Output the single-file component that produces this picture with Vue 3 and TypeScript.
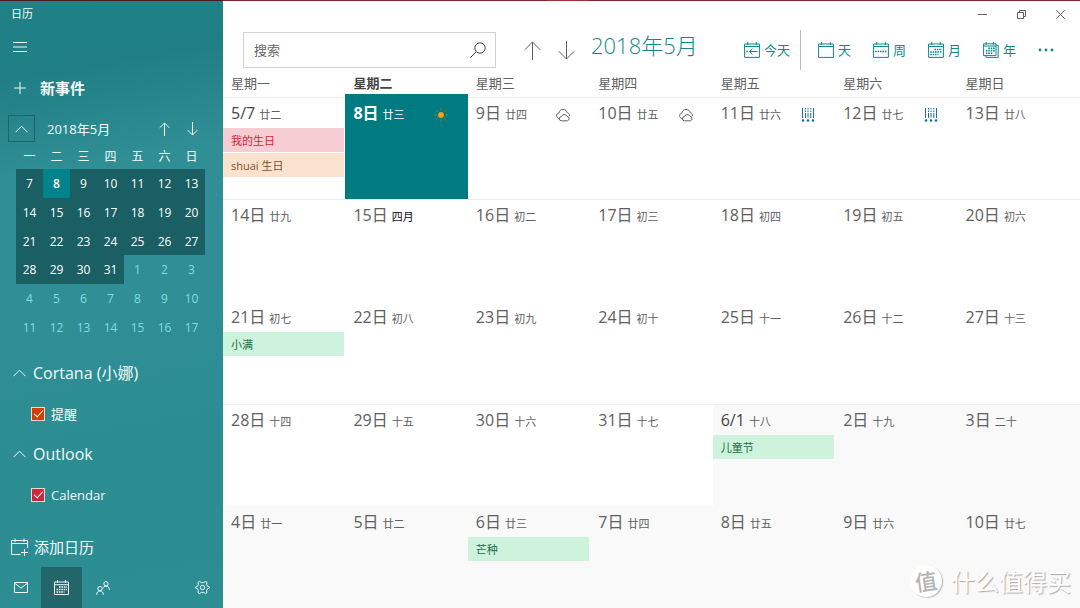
<script setup lang="ts">
import { ref } from 'vue'

interface CalendarEvent {
  title: string
  tone: 'rose' | 'sand' | 'mint'
}

interface Day {
  label: string
  lunar: string
  today?: boolean
  outside?: boolean
  strong?: boolean
  lunarStrong?: boolean
  weather?: 'sun' | 'cloud' | 'rain'
  events?: CalendarEvent[]
}

interface MiniDay {
  n: number
  current: boolean
  today: boolean
}

const weekdays = ['一', '二', '三', '四', '五', '六', '日']

const weeks: Day[][] = [
  [
    {
      label: '5/7',
      lunar: '廿二',
      strong: true,
      events: [
        { title: '我的生日', tone: 'rose' },
        { title: 'shuai 生日', tone: 'sand' },
      ],
    },
    { label: '8日', lunar: '廿三', today: true, weather: 'sun' },
    { label: '9日', lunar: '廿四', weather: 'cloud' },
    { label: '10日', lunar: '廿五', weather: 'cloud' },
    { label: '11日', lunar: '廿六', weather: 'rain' },
    { label: '12日', lunar: '廿七', weather: 'rain' },
    { label: '13日', lunar: '廿八' },
  ],
  [
    { label: '14日', lunar: '廿九' },
    { label: '15日', lunar: '四月', lunarStrong: true },
    { label: '16日', lunar: '初二' },
    { label: '17日', lunar: '初三' },
    { label: '18日', lunar: '初四' },
    { label: '19日', lunar: '初五' },
    { label: '20日', lunar: '初六' },
  ],
  [
    { label: '21日', lunar: '初七', events: [{ title: '小满', tone: 'mint' }] },
    { label: '22日', lunar: '初八' },
    { label: '23日', lunar: '初九' },
    { label: '24日', lunar: '初十' },
    { label: '25日', lunar: '十一' },
    { label: '26日', lunar: '十二' },
    { label: '27日', lunar: '十三' },
  ],
  [
    { label: '28日', lunar: '十四' },
    { label: '29日', lunar: '十五' },
    { label: '30日', lunar: '十六' },
    { label: '31日', lunar: '十七' },
    { label: '6/1', lunar: '十八', strong: true, outside: true, events: [{ title: '儿童节', tone: 'mint' }] },
    { label: '2日', lunar: '十九', outside: true },
    { label: '3日', lunar: '二十', outside: true },
  ],
  [
    { label: '4日', lunar: '廿一', outside: true },
    { label: '5日', lunar: '廿二', outside: true },
    { label: '6日', lunar: '廿三', outside: true, events: [{ title: '芒种', tone: 'mint' }] },
    { label: '7日', lunar: '廿四', outside: true },
    { label: '8日', lunar: '廿五', outside: true },
    { label: '9日', lunar: '廿六', outside: true },
    { label: '10日', lunar: '廿七', outside: true },
  ],
]

const miniWeeks: MiniDay[][] = Array.from({ length: 6 }, (_, w) =>
  Array.from({ length: 7 }, (_, d) => {
    const n = 7 + w * 7 + d
    return { n: n > 31 ? n - 31 : n, current: n <= 31, today: n === 8 }
  }),
)

const query = ref('')
const showReminders = ref(true)
const showCalendar = ref(true)
</script>

<template>
  <div class="window">
    <div class="edge"></div>

    <aside class="sidebar">
      <div class="app-title">日历</div>
      <button class="row menu" aria-label="菜单">
        <svg width="14" height="12" viewBox="0 0 14 12"><path d="M0 1.5H14M0 6H14M0 10.5H14" /></svg>
      </button>
      <button class="row new-event">
        <svg width="12" height="12" viewBox="0 0 12 12"><path d="M6 0V12M0 6H12" /></svg>
        <span>新事件</span>
      </button>

      <div class="mini-head">
        <button class="collapse" aria-label="折叠">
          <svg width="13" height="8" viewBox="0 0 13 8"><path d="M.5 7.2L6.5 1.2L12.5 7.2" /></svg>
        </button>
        <span class="mini-title">2018年5月</span>
        <button class="mini-nav" aria-label="上个月">
          <svg width="11" height="14" viewBox="0 0 11 14"><path d="M5.5 14V1M.7 5.8L5.5 1L10.3 5.8" /></svg>
        </button>
        <button class="mini-nav" aria-label="下个月">
          <svg width="11" height="14" viewBox="0 0 11 14"><path d="M5.5 0V13M.7 8.2L5.5 13L10.3 8.2" /></svg>
        </button>
      </div>

      <table class="mini">
        <thead>
          <tr>
            <th v-for="d in weekdays" :key="d" scope="col">{{ d }}</th>
          </tr>
        </thead>
        <tbody>
          <tr v-for="(week, i) in miniWeeks" :key="i">
            <td v-for="day in week" :key="day.n" :class="{ current: day.current, today: day.today }">{{ day.n }}</td>
          </tr>
        </tbody>
      </table>

      <div class="accounts">
        <button class="row group">
          <svg width="13" height="8" viewBox="0 0 13 8"><path d="M.5 7.2L6.5 1.2L12.5 7.2" /></svg>
          <span>Cortana (小娜)</span>
        </button>
        <label class="row check">
          <input v-model="showReminders" type="checkbox" class="box orange" />
          <span>提醒</span>
        </label>
        <button class="row group">
          <svg width="13" height="8" viewBox="0 0 13 8"><path d="M.5 7.2L6.5 1.2L12.5 7.2" /></svg>
          <span>Outlook</span>
        </button>
        <label class="row check">
          <input v-model="showCalendar" type="checkbox" class="box red" />
          <span>Calendar</span>
        </label>
      </div>

      <button class="row add">
        <svg width="18" height="18" viewBox="0 0 18 18">
          <path d="M9.5 16.5H.6V2.5H16.6V10M.6 5.5H16.6M4 .5V4M13 .5V4M13.5 11V18M10 14.5H17" />
        </svg>
        <span>添加日历</span>
      </button>

      <nav class="tabs">
        <button class="tab" aria-label="邮件">
          <svg width="14" height="11" viewBox="0 0 14 11"><path d="M.5.5H13.5V10.5H.5ZM.5 1L7 6.2L13.5 1" /></svg>
        </button>
        <button class="tab active" aria-label="日历">
          <svg width="15" height="15" viewBox="0 0 15 15">
            <path d="M.5 2H14.5V14.5H.5ZM.5 4.7H14.5M3.5 0V3M11.5 0V3" />
            <path class="dots" d="M5 7H13M2.5 9.5H13M2.5 12H10.5" />
          </svg>
        </button>
        <button class="tab" aria-label="联系人">
          <svg width="14" height="14" viewBox="0 0 14 14">
            <circle cx="4" cy="7.6" r="2.2" />
            <circle cx="10" cy="2.8" r="2.2" />
            <path d="M.7 13.8C.7 11.3 2 9.9 4 9.9S7.3 11.3 7.3 13.8M7.3 7.2C7.7 5.8 8.6 5.1 10 5.1C12 5.1 13.3 6.4 13.3 8.8" />
          </svg>
        </button>
        <button class="tab last" aria-label="设置">
          <svg width="15" height="15" viewBox="0 0 15 15">
            <path d="M4.6 1.4L6.3 2.6H8.7L10.4 1.4L12 2.4L11.6 4.5L12.7 6.4L14.5 7V8L12.7 8.6L11.6 10.5L12 12.6L10.4 13.6L8.7 12.4H6.3L4.6 13.6L3 12.6L3.4 10.5L2.3 8.6L.5 8V7L2.3 6.4L3.4 4.5L3 2.4Z" />
            <circle cx="7.5" cy="7.5" r="2.2" />
          </svg>
        </button>
      </nav>
    </aside>

    <main class="main">
      <div class="controls">
        <button aria-label="最小化"><svg width="9" height="9" viewBox="0 0 9 9"><path d="M0 4.5H9" /></svg></button>
        <button aria-label="还原">
          <svg width="9" height="9" viewBox="0 0 9 9"><path d="M.5 2.5H6.5V8.5H.5ZM2.5 2.5V.5H8.5V6.5H6.5" /></svg>
        </button>
        <button aria-label="关闭"><svg width="9" height="9" viewBox="0 0 9 9"><path d="M.3.3L8.7 8.7M8.7.3L.3 8.7" /></svg></button>
      </div>

      <div class="toolbar">
        <div class="search">
          <input v-model="query" type="text" placeholder="搜索" aria-label="搜索" />
          <button aria-label="开始搜索">
            <svg width="16" height="16" viewBox="0 0 16 16"><circle cx="10" cy="6" r="5.2" /><path d="M6.2 9.8L.5 15.5" /></svg>
          </button>
        </div>
        <button class="step" aria-label="上个月">
          <svg width="17" height="19" viewBox="0 0 17 19"><path d="M8.5 19V1M.7 8.8L8.5 1L16.3 8.8" /></svg>
        </button>
        <button class="step" aria-label="下个月">
          <svg width="17" height="19" viewBox="0 0 17 19"><path d="M8.5 0V18M.7 10.2L8.5 18L16.3 10.2" /></svg>
        </button>
        <h1>2018年5月</h1>

        <div class="views">
          <button class="view">
            <svg width="16" height="16" viewBox="0 0 16 16">
              <path d="M.6 2H15.4V15.4H.6ZM.6 4.5H15.4M3.7 0V3M12.3 0V3M5.5 9.5H13.5M8.5 6.5L5.5 9.5L8.5 12.5" />
              <path class="dots" d="M2.2 9.5H4.5" />
            </svg>
            <span>今天</span>
          </button>
          <span class="divider"></span>
          <button class="view">
            <svg width="16" height="16" viewBox="0 0 16 16"><path d="M.6 2H15.4V15.4H.6ZM.6 4.5H15.4M3.7 0V3M12.3 0V3" /></svg>
            <span>天</span>
          </button>
          <button class="view">
            <svg width="16" height="16" viewBox="0 0 16 16">
              <path d="M.6 2H15.4V15.4H.6ZM.6 4.5H15.4M3.7 0V3M12.3 0V3" />
              <path class="dots" d="M2.2 9.5H14" />
            </svg>
            <span>周</span>
          </button>
          <button class="view">
            <svg width="16" height="16" viewBox="0 0 16 16">
              <path d="M.6 2H15.4V15.4H.6ZM.6 4.5H15.4M3.7 0V3M12.3 0V3" />
              <path class="dots" d="M6.4 7.5H14M2.2 10H14M2.2 12.5H10.5" />
            </svg>
            <span>月</span>
          </button>
          <button class="view">
            <svg width="16" height="16" viewBox="0 0 16 16">
              <path d="M.6 1.8H13V13.6H.6ZM.6 4H13M3.2 0V2.8M10.4 0V2.8M13 3.2H15.2V15.4H3V13.6" />
              <path class="dots" d="M5.3 6.4H12M2.9 8.8H12M2.9 11.2H9.5" />
            </svg>
            <span>年</span>
          </button>
          <button class="view" aria-label="更多">
            <svg width="16" height="4" viewBox="0 0 16 4" class="more">
              <circle cx="2" cy="2" r="1.4" /><circle cx="8" cy="2" r="1.4" /><circle cx="14" cy="2" r="1.4" />
            </svg>
          </button>
        </div>
      </div>

      <table class="month">
        <thead>
          <tr>
            <th v-for="(d, i) in weekdays" :key="d" scope="col" :class="{ today: i === 1 }">星期{{ d }}</th>
          </tr>
        </thead>
        <tbody>
          <tr v-for="(week, w) in weeks" :key="w" :class="{ ruled: w === 0 || w === 1 || w === 3 }">
            <td v-for="day in week" :key="day.label" :class="{ today: day.today, outside: day.outside }">
              <div class="day-head">
                <span class="date" :class="{ strong: day.strong }">{{ day.label }}</span>
                <span class="lunar" :class="{ strong: day.lunarStrong }">{{ day.lunar }}</span>
                <svg v-if="day.weather === 'sun'" class="weather sun" width="14" height="14" viewBox="0 0 14 14">
                  <path d="M7 .3V2.6M7 11.4V13.7M.3 7H2.6M11.4 7H13.7M2.2 2.2L3.8 3.8M10.2 10.2L11.8 11.8M2.2 11.8L3.8 10.2M10.2 3.8L11.8 2.2" />
                  <circle cx="7" cy="7" r="2.9" />
                </svg>
                <svg v-else-if="day.weather === 'cloud'" class="weather cloud" width="14" height="14" viewBox="0 0 14 14">
                  <path d="M5.6 12.8A2.1 2.1 0 0 1 5.4 8.6A3 3 0 0 1 11 8.3A2.3 2.3 0 0 1 11.4 12.8Z" />
                  <path d="M3.2 10.5C1.4 10.3.5 9 .6 7.6C.7 6.2 1.6 5.3 2.9 5.1C3.4 2.8 5 1.4 7 1.4C9.2 1.4 10.8 2.8 11.2 4.7C12.8 5 13.6 6.3 13.5 8" />
                </svg>
                <svg v-else-if="day.weather === 'rain'" class="weather rain" width="14" height="14" viewBox="0 0 14 14">
                  <path d="M1.5 0V10M12.5 0V10M4.5 6V10M7 5V9.5M9.8 6V10" />
                  <path class="dash" d="M4.5 0V6M7 0V5M9.8 0V6" />
                  <circle cx="2" cy="12.5" r="1.3" /><circle cx="7" cy="12.5" r="1.3" /><circle cx="12" cy="12.5" r="1.3" />
                </svg>
              </div>
              <div v-for="ev in day.events" :key="ev.title" class="event" :class="ev.tone">{{ ev.title }}</div>
            </td>
          </tr>
        </tbody>
      </table>
    </main>

    <div class="brand">
      <span class="seal">值</span>
      <span class="brand-name">什么值得买</span>
    </div>
  </div>
</template>

<style>
body {
  margin: 0;
}
</style>

<style scoped>
* {
  box-sizing: border-box;
}

.window {
  position: relative;
  display: grid;
  grid-template-columns: 223px minmax(0, 1fr);
  grid-template-rows: 1px minmax(0, 1fr);
  min-height: 100vh;
  background: #fff;
  color: #606060;
  font-family: 'Open Sans', 'Noto Sans CJK SC', sans-serif;
  font-size: 13px;
  line-height: 16px;
}

button {
  display: flex;
  align-items: center;
  margin: 0;
  padding: 0;
  border: 0;
  background: none;
  color: inherit;
  font: inherit;
  cursor: pointer;
}

svg {
  flex: none;
  fill: none;
  stroke: currentColor;
  stroke-width: 1;
}

.dots {
  stroke-width: 1.6;
  stroke-dasharray: 1.6 0.8;
}

.edge {
  grid-column: 1 / -1;
  background: linear-gradient(90deg, #4c1a1d 0 223px, #7b2b2f 223px 546px, #a82b30 546px 588px, #7b2b2f 588px);
}

/* Sidebar */
.sidebar {
  display: flex;
  flex-direction: column;
  background: linear-gradient(170deg, #1f8286 0%, #1f7f85 12%, #2f8f95 28%, #308f96 50%, #2b8c92 75%, #2c8d93 100%);
  color: #f2fafa;
}

.app-title {
  height: 27px;
  padding-left: 11px;
  font-size: 11px;
  line-height: 26px;
}

.row {
  display: flex;
  align-items: center;
  height: 40px;
}

.menu {
  height: 38px;
  padding-left: 13px;
}

.new-event {
  height: 44px;
  gap: 14px;
  padding-left: 14px;
  font-size: 15px;
  font-weight: 700;
}

.mini-head {
  display: flex;
  align-items: center;
  height: 37px;
  padding: 0 17px 0 8px;
}

.collapse {
  justify-content: center;
  width: 27px;
  height: 27px;
  border: 1px solid #1a6468;
}

.mini-title {
  flex: 1;
  padding-left: 12px;
}

.mini-nav {
  justify-content: center;
  width: 28px;
  height: 28px;
}

.mini {
  display: flex;
  flex-direction: column;
  gap: 4px;
  margin: 0 18px 0 16px;
  font-size: 12px;
}

.mini tr,
.month tr {
  display: grid;
  grid-template-columns: repeat(7, minmax(0, 1fr));
}

.mini th {
  padding: 2px 0 0;
  font-weight: 400;
  text-align: center;
}

.mini tbody {
  display: grid;
  grid-template-rows: repeat(6, 1fr);
  height: 172px;
}

.mini td {
  display: flex;
  align-items: center;
  justify-content: center;
  padding: 2px 0 0;
  color: #7fdde0;
}

.mini td.current {
  background: #195f64;
  color: #fff;
}

.mini td.today {
  background: #00838b;
  font-weight: 600;
}

.accounts {
  flex: 1;
  padding-top: 12px;
}

.group {
  gap: 7px;
  width: 100%;
  padding-left: 13px;
  font-size: 16px;
}

.check {
  gap: 6px;
  height: 41px;
  padding-left: 31px;
}

.box {
  appearance: none;
  display: grid;
  place-items: center;
  width: 14px;
  height: 14px;
  margin: 0;
  border: 1px solid #e9d9d2;
}

.box:checked::before {
  content: '';
  width: 8px;
  height: 4px;
  margin-bottom: 3px;
  border: solid #fff;
  border-width: 0 0 1px 1px;
  transform: rotate(-48deg);
}

.orange {
  background: #da3b01;
}

.red {
  background: #d0263c;
}

.add {
  gap: 5px;
  padding-left: 11px;
  font-size: 15px;
}

.tabs {
  display: flex;
  height: 41px;
}

.tab {
  justify-content: center;
  width: 41px;
}

.tab.active {
  background: #22666b;
}

.tab.last {
  margin-left: auto;
}

/* Main area */
.main {
  display: flex;
  flex-direction: column;
  min-width: 0;
}

.controls {
  display: flex;
  justify-content: flex-end;
  height: 26px;
}

.controls button {
  justify-content: center;
  width: 39px;
}

.toolbar {
  display: flex;
  align-items: center;
  height: 46px;
  padding: 0 26px 0 20px;
}

.search {
  display: flex;
  flex: 0 1 253px;
  height: 36px;
  border: 1px solid #d2d2d2;
}

.search input {
  flex: 1;
  min-width: 0;
  padding: 0 10px;
  border: 0;
  outline: 0;
  background: none;
  color: #444;
  font: inherit;
}

.search input::placeholder {
  color: #666;
  opacity: 1;
}

.search button {
  justify-content: center;
  width: 34px;
  color: #444;
}

.step {
  justify-content: center;
  width: 34px;
  height: 34px;
}

.step:first-of-type {
  margin-left: 19px;
}

h1 {
  margin: 0 0 10px 8px;
  color: #15858a;
  font-size: 22px;
  font-weight: 300;
  line-height: 30px;
  white-space: nowrap;
}

.views {
  display: flex;
  align-items: center;
  gap: 22px;
  margin-left: auto;
  color: #15858a;
}

.view {
  gap: 4px;
  height: 32px;
  white-space: nowrap;
}

.view:first-child {
  margin-right: -12px;
}

.divider {
  width: 1px;
  height: 40px;
  margin-right: -5px;
  background: #bdbdbd;
}

.more {
  fill: currentColor;
  stroke: none;
}

.month {
  display: flex;
  flex: 1;
  flex-direction: column;
}

.month th {
  padding: 0 8px 4px;
  font-weight: 400;
  line-height: 20px;
  text-align: left;
}

.month th.today {
  color: #444;
  font-weight: 700;
}

.month tbody {
  display: grid;
  flex: 1;
  grid-template-rows: repeat(5, minmax(102px, 1fr));
}

.month td {
  min-width: 0;
  padding: 0;
  border-top: 1px solid transparent;
}

.month .ruled td {
  border-top-color: #ececec;
}

.month td.outside {
  background: #f9f9f9;
}

.month .ruled td.today {
  margin-top: -3px;
  padding-top: 3px;
  border-top-color: #007b81;
  background: #007b81;
  color: #fff;
}

.day-head {
  display: flex;
  align-items: baseline;
  height: 30px;
  padding: 0 20px 0 8px;
  line-height: 30px;
}

.date {
  font-size: 16px;
}

.date.strong {
  color: #444;
}

.lunar {
  margin-left: 4px;
  font-size: 11px;
}

.lunar.strong {
  color: #111;
}

.today .date {
  font-weight: 700;
}

.weather {
  align-self: center;
  margin-left: auto;
  margin-top: 3px;
}

.sun {
  stroke: #a5761c;
}

.sun circle {
  fill: #f9a01b;
  stroke: none;
}

.rain {
  stroke: #16719c;
}

.rain circle {
  fill: #16719c;
  stroke: none;
}

.dash {
  stroke-dasharray: 1.5 1;
}

.event {
  height: 24px;
  margin: 0 1px 1px 0;
  padding-left: 8px;
  overflow: hidden;
  font-size: 11px;
  line-height: 25px;
  white-space: nowrap;
}

.rose {
  background: #f5cdd2;
  color: #d0263c;
}

.sand {
  background: #fae2cf;
  color: #85501f;
}

.mint {
  background: #cdf3dd;
  color: #1b6e43;
}

/* Corner brand mark */
.brand {
  position: absolute;
  right: 9px;
  bottom: 11px;
  display: flex;
  align-items: center;
  gap: 9px;
  color: #fff;
  font-family: 'Noto Sans CJK SC', sans-serif;
  pointer-events: none;
}

.seal {
  width: 32px;
  height: 32px;
  border-radius: 50%;
  background: #fff;
  box-shadow: 1px 1px 1px #bbb;
  color: #b5b5b5;
  font-size: 22px;
  font-weight: 500;
  line-height: 31px;
  text-align: center;
  transform: rotate(-8deg);
}

.brand-name {
  font-size: 24px;
  line-height: 32px;
  text-shadow: 1px 1px 1px #a8a8a8;
}
</style>
